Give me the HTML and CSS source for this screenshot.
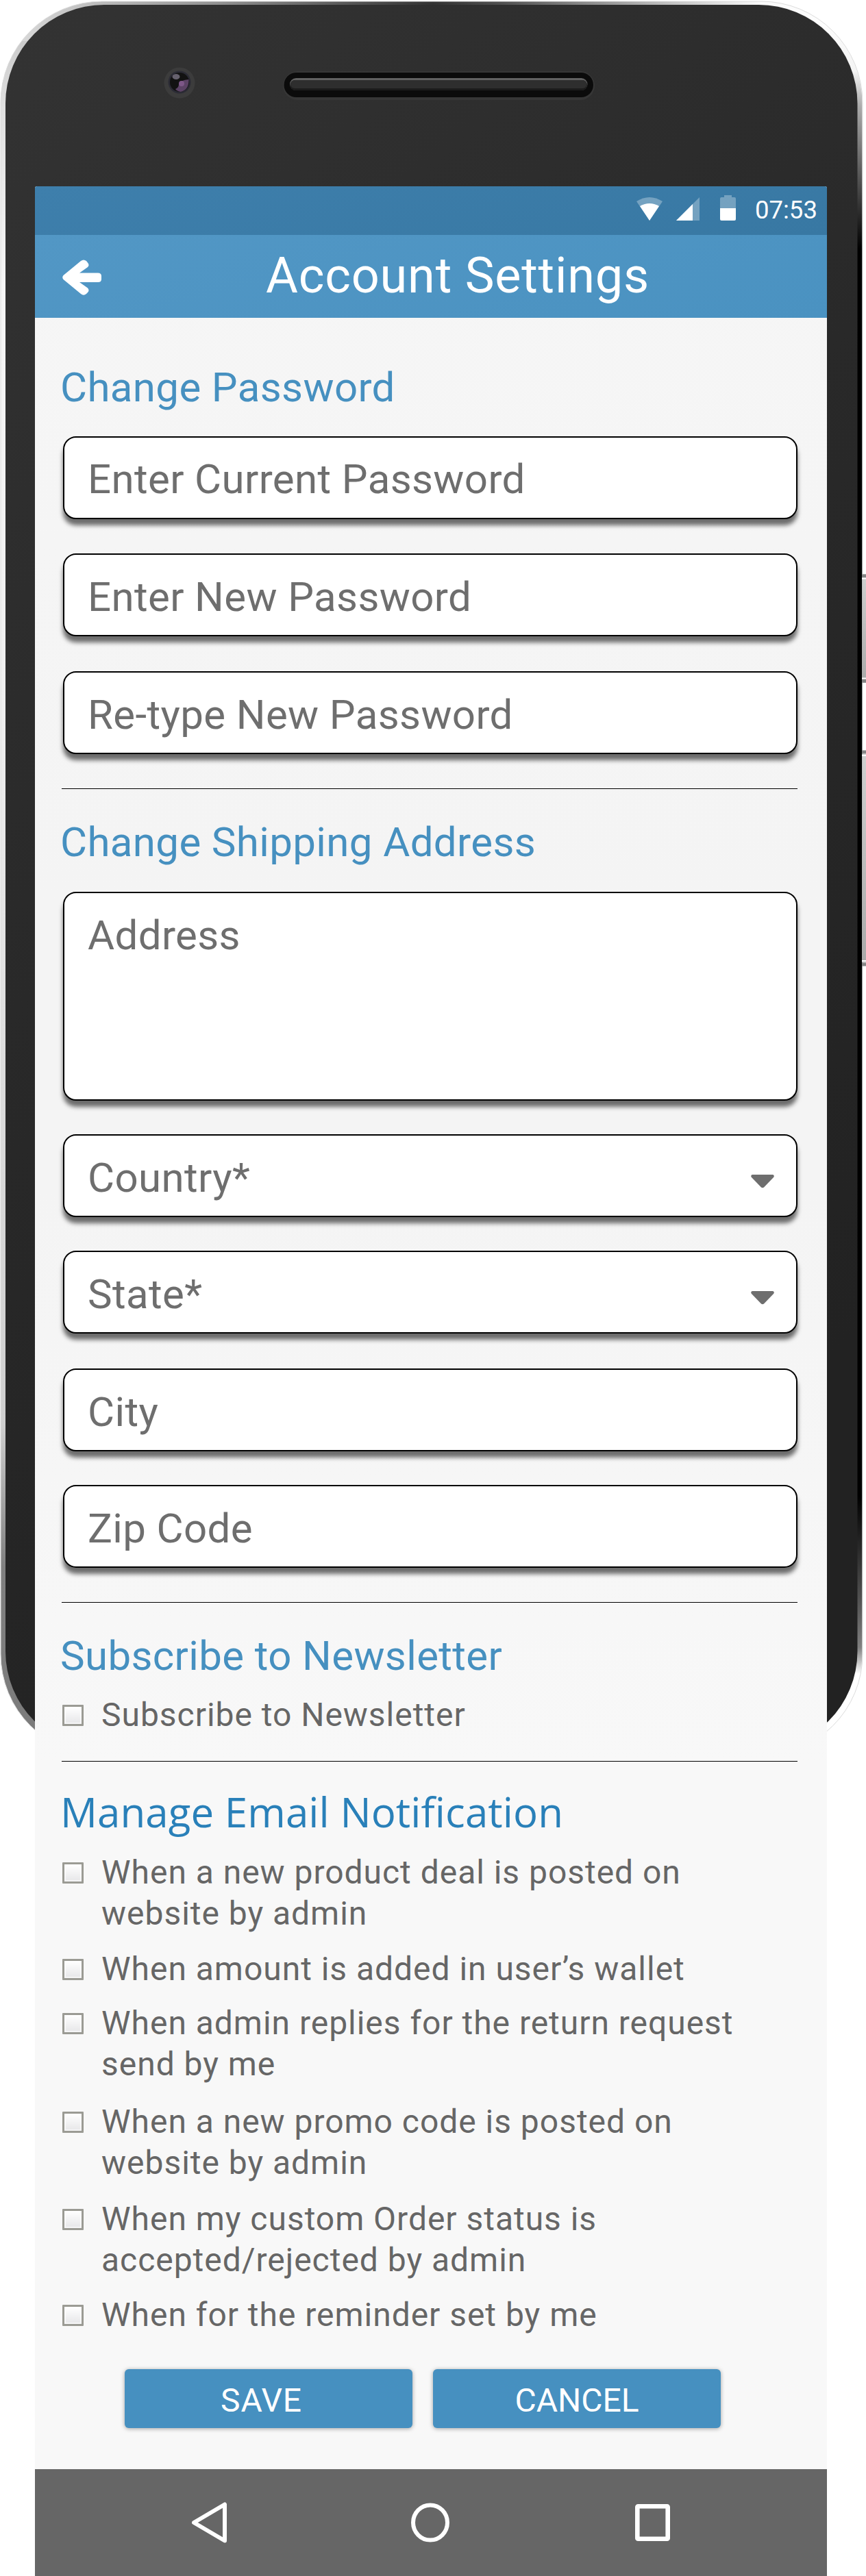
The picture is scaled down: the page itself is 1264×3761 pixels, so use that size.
FILE: index.html
```
<!DOCTYPE html>
<html lang="en">
<head>
<meta charset="utf-8">
<title>Account Settings</title>
<link rel="stylesheet" href="styles.css">
</head>
<body>
<div class="phone">
  <svg class="shell" viewBox="0 0 1264 2600" aria-hidden="true">
    <defs>
      <linearGradient id="rimTop" x1="0" x2="1">
        <stop offset="0" stop-color="#e0e0e0"/><stop offset=".11" stop-color="#bdbdbd"/>
        <stop offset=".25" stop-color="#929292"/><stop offset=".42" stop-color="#505050"/>
        <stop offset=".5" stop-color="#333"/><stop offset=".58" stop-color="#505050"/>
        <stop offset=".75" stop-color="#b5b5b5"/><stop offset=".88" stop-color="#fafafa"/><stop offset="1" stop-color="#fff"/>
      </linearGradient>
      <linearGradient id="rimLeft" gradientUnits="userSpaceOnUse" x1="0" y1="0" x2="0" y2="2600">
        <stop offset="0" stop-color="#bdbdbd"/><stop offset=".06" stop-color="#e0e0e0"/>
        <stop offset=".16" stop-color="#f6f6f6"/><stop offset=".4" stop-color="#efefef"/>
        <stop offset=".6" stop-color="#dcdcdc"/><stop offset=".8" stop-color="#cfcfcf"/>
        <stop offset=".88" stop-color="#808080"/><stop offset="1" stop-color="#7a7a7a"/>
      </linearGradient>
      <linearGradient id="rimRight" gradientUnits="userSpaceOnUse" x1="0" y1="0" x2="0" y2="2600">
        <stop offset="0" stop-color="#fff"/><stop offset=".04" stop-color="#f4f4f4"/>
        <stop offset=".06" stop-color="#aaa"/><stop offset=".1" stop-color="#555"/>
        <stop offset=".14" stop-color="#000"/><stop offset=".84" stop-color="#000"/>
        <stop offset=".9" stop-color="#555"/><stop offset=".925" stop-color="#808080"/>
        <stop offset=".94" stop-color="#fff"/><stop offset="1" stop-color="#fff"/>
      </linearGradient>
      <linearGradient id="face" x1="0" x2=".4" y1="0" y2="1">
        <stop offset="0" stop-color="#333"/><stop offset=".5" stop-color="#292929"/><stop offset="1" stop-color="#222"/>
      </linearGradient>
      <linearGradient id="key" x1="0" x2="0" y1="0" y2="1">
        <stop offset="0" stop-color="#d0d0d0"/><stop offset="1" stop-color="#aaa"/>
      </linearGradient>
      <clipPath id="outline"><rect x="1" y="2" width="1257.500" height="2561" rx="148"/></clipPath>
    </defs>
    <g clip-path="url(#outline)">
      <rect width="1264" height="2600" fill="url(#rimTop)"/>
      <rect y="60" width="120" height="2540" fill="url(#rimLeft)"/>
      <rect x="1150" y="40" width="114" height="2560" fill="url(#rimRight)"/>
    </g>
    <rect x="1" y="2" width="1258" height="2561" rx="148" fill="none" stroke="#dcdcdc" stroke-width="1"/>
    <rect x="8" y="7" width="1243.500" height="2548" rx="144" fill="url(#face)"/>
    <rect x="1258.500" y="838" width="6" height="159" fill="url(#key)"/>
    <path d="M1258 841h6M1258 994h6M1258 1098h6M1258 1408h6" stroke="#858585" stroke-width="5"/>
    <rect x="1258.500" y="1101" width="6" height="304" fill="url(#key)"/>
    <path d="M1258 844.500h6M1258 990.500h6M1258 1103h6M1258 1403h6" stroke="#fff" stroke-width="2"/>
    <circle cx="262" cy="121" r="22.500" fill="#3c3c3c"/>
    <circle cx="262" cy="120" r="16.500" fill="#2b2b35"/>
    <circle cx="262" cy="120" r="14" fill="#121212"/>
    <path d="M275.500 116Q276 131 264 134Q258 133 256 130Q261 128 261 123Q263 117 275.500 116Z" fill="#5c4366"/>
    <circle cx="265" cy="122" r="4" fill="#7d5788"/>
    <ellipse cx="257" cy="112" rx="5.500" ry="4" fill="#66616e"/>
    <rect x="413" y="104" width="455" height="42" rx="21" fill="#363636"/>
    <rect x="414.500" y="106" width="451.500" height="36" rx="18" fill="#0b0b0b"/>
    <rect x="423" y="114" width="434.500" height="18" rx="9" fill="#616161"/>
    <rect x="423.500" y="117" width="433.500" height="15" rx="7.500" fill="#1b1b1b"/>
    <rect x="424" y="117" width="432.500" height="12" rx="6" fill="#2e2e2e"/>
  </svg>

  <main class="screen">
    <div class="status">
      <svg class="wifi" viewBox="0 0 38 34"><path d="M0 6Q19-6 38 6L19 34Z" opacity=".3"/><path d="M5 13Q19 5 33 13L19 34Z"/></svg>
      <svg class="signal" viewBox="0 0 34 34"><path d="M34 0V34H0Z" opacity=".3"/><path d="M24 10V34H0Z"/></svg>
      <svg class="battery" viewBox="0 0 23 37"><path d="M6 0H17V3H21Q23 3 23 5V19H0V5Q0 3 2 3H6Z" opacity=".3"/><path d="M0 19H23V35Q23 37 21 37H2Q0 37 0 35Z"/></svg>
      <span class="time">07:53</span>
    </div>
    <header class="appbar">
      <svg class="back" viewBox="0 0 57 52"><path d="M1.500 23L27 2Q31-1 35 2L37 4.500Q40 8 37 11L25 19.500H52Q57 19.500 57 24V28.500Q57 33 52 33H25L37 41.500Q40 45 37 48L35 50Q31 53.500 27 50L1.500 29Q-1 26 1.500 23Z"/></svg>
      <h1 class="title">Account Settings</h1>
    </header>

    <form class="content">
      <h2 class="heading heading-first">Change Password</h2>
      <div class="field field-first after-heading">Enter Current Password</div>
      <div class="field gap-m">Enter New Password</div>
      <div class="field gap-l">Re-type New Password</div>
      <div class="rule"></div>

      <h2 class="heading">Change Shipping Address</h2>
      <div class="field field-area after-heading">Address</div>
      <div class="field gap-s">Country*<svg class="caret" viewBox="0 0 34 20"><path d="M2 0H32Q35 1 33 4L19 18.500Q17 20 15 18.500L1 4Q-1 1 2 0Z"/></svg></div>
      <div class="field gap-s">State*<svg class="caret" viewBox="0 0 34 20"><path d="M2 0H32Q35 1 33 4L19 18.500Q17 20 15 18.500L1 4Q-1 1 2 0Z"/></svg></div>
      <div class="field gap-l">City</div>
      <div class="field gap-s">Zip Code</div>
      <div class="rule"></div>

      <h2 class="heading">Subscribe to Newsletter</h2>
      <label class="option option-single"><span class="box"></span><span>Subscribe to Newsletter</span></label>
      <div class="rule rule-tight"></div>

      <h2 class="heading heading-manage">Manage Email Notification</h2>
      <div class="options">
        <label class="option"><span class="box"></span><span>When a new product deal is posted on<br>website by admin</span></label>
        <label class="option"><span class="box"></span><span>When amount is added in user’s wallet</span></label>
        <label class="option option-near"><span class="box"></span><span>When admin replies for the return request<br>send by me</span></label>
        <label class="option option-far"><span class="box"></span><span>When a new promo code is posted on<br>website by admin</span></label>
        <label class="option option-mid"><span class="box"></span><span>When my custom Order status is<br>accepted/rejected by admin</span></label>
        <label class="option option-last"><span class="box"></span><span>When for the reminder set by me</span></label>
      </div>
      <div class="actions">
        <div class="button button-save">SAVE</div>
        <div class="button">CANCEL</div>
      </div>
    </form>

    <nav class="navbar">
      <svg class="nav-back" viewBox="0 0 51 60"><path d="M48 3.500V56.500L3 30Z"/></svg>
      <svg class="nav-home" viewBox="0 0 56 58"><ellipse cx="28" cy="29" rx="25" ry="25.500"/></svg>
      <svg class="nav-recent" viewBox="0 0 51 54"><rect x="3.300" y="3.300" width="44.400" height="47.400" rx="1"/></svg>
    </nav>
  </main>
</div>
</body>
</html>
```
FILE: styles.css
```
body {
  margin: 0;
  background: #fff;
  font-family: Roboto, "Liberation Sans", sans-serif;
}

.phone {
  position: relative;
  width: 1264px;
  height: 3761px;
  padding-top: 272px;
  box-sizing: border-box;
  overflow: hidden;
}

.shell {
  position: absolute;
  top: 0;
  left: 0;
  width: 1264px;
  height: 2600px;
}

.screen {
  position: relative;
  width: 1156px;
  margin-left: 51px;
  border-radius: 3px 3px 0 0;
  overflow: hidden;
  background: linear-gradient(#f6f6f6, #f4f4f4 30%, #f4f4f4 42%, #f8f8f8 66%, #f8f8f8);
}

.status {
  display: flex;
  align-items: flex-start;
  height: 71px;
  padding-left: 878px;
  background: linear-gradient(165deg, #3e7fac, #3878a3);
  fill: #fff;
}

.wifi { width: 38px; height: 34px; margin: 16px 20px 0 0; }
.signal { width: 34px; height: 34px; margin: 16px 30px 0 0; }
.battery { width: 23px; height: 37px; margin: 13px 28px 0 0; }

.time {
  color: #fff;
  font-size: 36.500px;
  line-height: 70px;
}

.appbar {
  display: flex;
  align-items: flex-start;
  height: 121px;
  padding-left: 40px;
  background: linear-gradient(165deg, #5297c5, #4a92c1);
}

.back {
  width: 57px;
  height: 52px;
  margin: 36px 240px 0 0;
  fill: #fff;
  overflow: visible;
}

.title {
  margin: 0;
  color: #fff;
  font-size: 72px;
  font-weight: 400;
  line-height: 119px;
  letter-spacing: .8px;
}

.content {
  box-sizing: border-box;
  height: 3141px;
  padding: 67px 43px 60px 37px;
}

.heading {
  margin: 43px 0 0;
  color: #4690c0;
  font-size: 60px;
  font-weight: 400;
  line-height: 70px;
  letter-spacing: .37px;
}

.heading-first { margin-top: 0; }

.heading-manage {
  margin-top: 38px;
  color: #2980b9;
  font-family: "Open Sans", sans-serif;
  letter-spacing: .08px;
}

.field {
  position: relative;
  box-sizing: border-box;
  height: 121px;
  margin-left: 4px;
  padding: 2px 34px 0;
  border: 2px solid #000;
  border-radius: 19px;
  background: #fff;
  box-shadow: 0 9px 6px rgba(0, 0, 0, .56);
  color: #6e6e6e;
  font-size: 60px;
  line-height: 119px;
  letter-spacing: .37px;
}

.field-first { padding-top: 1px; }
.field-area { height: 305px; }
.after-heading { margin-top: 36px; }
.heading + .field-area { margin-top: 37px; }
.gap-s { margin-top: 49px; }
.gap-m { margin-top: 50px; }
.gap-l { margin-top: 51px; }

.caret {
  position: absolute;
  top: 57px;
  right: 32px;
  width: 34px;
  height: 20px;
  fill: #6e6e6e;
}

.rule {
  height: 1px;
  margin: 50px 0 0 2px;
  background: #000;
}

.rule-tight { margin-top: 37px; }

.options { padding-top: 3px; }

.option {
  display: flex;
  gap: 26px;
  margin: 21px 0 0 3px;
  color: #666;
  font-size: 48px;
  line-height: 60px;
  letter-spacing: .97px;
  white-space: nowrap;
}

.option-near { margin-top: 19px; }
.option-far { margin-top: 24px; }
.option-mid { margin-top: 22px; }
.option-last { margin-top: 20px; }

.box {
  box-sizing: border-box;
  flex: none;
  width: 31px;
  height: 31px;
  margin-top: 15px;
  border: 3px solid #9b9b94;
  border-radius: 1px;
  background: linear-gradient(#fff, #e6e6e8);
  box-shadow: inset 0 0 0 2px rgba(255, 255, 255, .6);
}

.actions {
  display: flex;
  gap: 30px;
  margin: 49px 0 0 94px;
}

.button {
  box-sizing: border-box;
  width: 420px;
  height: 86px;
  border-radius: 6px;
  background: #4690c0;
  box-shadow: 0 1px 6px rgba(0, 0, 0, .35);
  color: #fff;
  font-size: 48px;
  line-height: 91px;
  text-align: center;
}

.button-save {
  padding-right: 21px;
  letter-spacing: .8px;
}

.navbar {
  display: flex;
  align-items: center;
  height: 156px;
  padding-left: 229px;
  background: #666;
  fill: none;
  stroke: #fff;
  stroke-width: 6px;
  stroke-linejoin: round;
}

.nav-back { width: 51px; height: 60px; margin-right: 269px; }
.nav-home { width: 56px; height: 58px; margin-right: 271px; }
.nav-recent { width: 51px; height: 54px; stroke-width: 6.600px; }
```
